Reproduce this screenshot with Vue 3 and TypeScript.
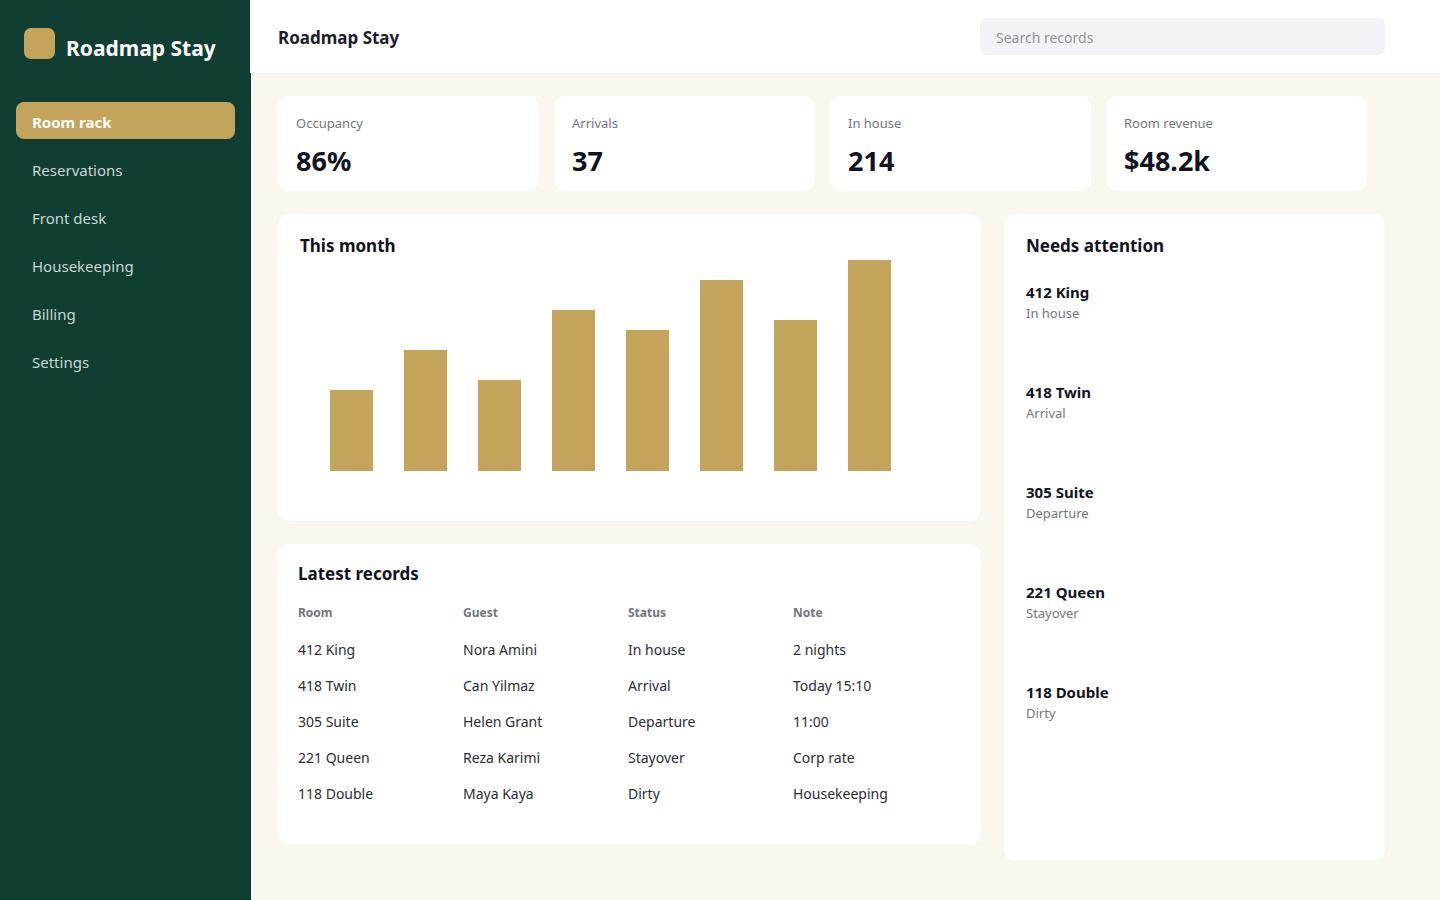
<script setup lang="ts">
import { ref } from 'vue'

interface RoomRecord {
  room: string
  guest: string
  status: string
  note: string
}

const navItems: string[] = ['Room rack', 'Reservations', 'Front desk', 'Housekeeping', 'Billing', 'Settings']
const active = ref<string>('Room rack')
const query = ref<string>('')

const stats: { label: string; value: string }[] = [
  { label: 'Occupancy', value: '86%' },
  { label: 'Arrivals', value: '37' },
  { label: 'In house', value: '214' },
  { label: 'Room revenue', value: '$48.2k' },
]

const bars: number[] = [81, 121, 91, 161, 141, 191, 151, 211]

const records: RoomRecord[] = [
  { room: '412 King', guest: 'Nora Amini', status: 'In house', note: '2 nights' },
  { room: '418 Twin', guest: 'Can Yilmaz', status: 'Arrival', note: 'Today 15:10' },
  { room: '305 Suite', guest: 'Helen Grant', status: 'Departure', note: '11:00' },
  { room: '221 Queen', guest: 'Reza Karimi', status: 'Stayover', note: 'Corp rate' },
  { room: '118 Double', guest: 'Maya Kaya', status: 'Dirty', note: 'Housekeeping' },
]
</script>

<template>
  <div class="app">
    <aside class="sidebar">
      <div class="brand">
        <span class="brand-mark"></span>
        <span class="brand-name">Roadmap Stay</span>
      </div>
      <nav class="nav" aria-label="Main">
        <a
          v-for="item in navItems"
          :key="item"
          href="#"
          class="nav-link"
          :class="{ active: item === active }"
          @click.prevent="active = item"
        >{{ item }}</a>
      </nav>
    </aside>

    <div class="page">
      <header class="topbar">
        <h1 class="page-title">Roadmap Stay</h1>
        <input v-model="query" class="search" type="search" placeholder="Search records" aria-label="Search records" />
      </header>

      <main class="content">
        <section class="stats">
          <div v-for="s in stats" :key="s.label" class="card stat">
            <div class="stat-label">{{ s.label }}</div>
            <div class="stat-value">{{ s.value }}</div>
          </div>
        </section>

        <div class="columns">
          <div class="left">
            <section class="card month">
              <h2 class="card-title">This month</h2>
              <div class="chart">
                <div v-for="(h, i) in bars" :key="i" class="bar" :style="{ height: h + 'px' }"></div>
              </div>
            </section>

            <section class="card records">
              <h2 class="card-title">Latest records</h2>
              <table class="table">
                <thead>
                  <tr>
                    <th scope="col">Room</th>
                    <th scope="col">Guest</th>
                    <th scope="col">Status</th>
                    <th scope="col">Note</th>
                  </tr>
                </thead>
                <tbody>
                  <tr v-for="r in records" :key="r.room">
                    <td>{{ r.room }}</td>
                    <td>{{ r.guest }}</td>
                    <td>{{ r.status }}</td>
                    <td>{{ r.note }}</td>
                  </tr>
                </tbody>
              </table>
            </section>
          </div>

          <section class="card attention">
            <h2 class="card-title">Needs attention</h2>
            <ul class="attention-list">
              <li v-for="r in records" :key="r.room" class="attention-item">
                <div class="attention-room">{{ r.room }}</div>
                <div class="attention-status">{{ r.status }}</div>
              </li>
            </ul>
          </section>
        </div>
      </main>
    </div>
  </div>
</template>

<style>
body {
  margin: 0;
  background: #faf7ef;
}
</style>

<style scoped>
.app {
  display: flex;
  min-height: 100vh;
  font-family: 'Noto Sans', 'Open Sans', sans-serif;
  color: #11141f;
}

.sidebar {
  box-sizing: border-box;
  flex: 0 0 251px;
  padding: 28px 16px;
  background: #113e33;
}

.brand {
  display: flex;
  align-items: flex-start;
  gap: 11px;
  padding: 0 8px;
  margin-bottom: 34px;
}

.brand-mark {
  width: 31px;
  height: 31px;
  border-radius: 7px;
  background: #c4a35a;
}

.brand-name {
  font-size: 21px;
  font-weight: 700;
  line-height: 40px;
  color: #fff;
  white-space: nowrap;
}

.nav {
  display: flex;
  flex-direction: column;
  gap: 11px;
}

.nav-link {
  padding: 4px 16px 0;
  border-radius: 8px;
  font-size: 15px;
  line-height: 33px;
  color: #c8d7d2;
  text-decoration: none;
}

.nav-link.active {
  background: #c4a35a;
  color: #fff;
  font-weight: 700;
}

.page {
  flex: 1;
  min-width: 0;
}

.topbar {
  display: flex;
  align-items: center;
  justify-content: space-between;
  gap: 24px;
  padding: 18px 55px 18px 28px;
  margin-left: -1px;
  background: #fff;
}

.page-title {
  margin: 0;
  padding-top: 2px;
  font-size: 17px;
  font-weight: 700;
  line-height: 26px;
  color: #1b1e28;
}

.search {
  box-sizing: border-box;
  flex: 0 1 405px;
  min-width: 0;
  height: 37px;
  padding: 2px 16px 0;
  border: 0;
  border-radius: 8px;
  background: #f1f3f7;
  font-family: inherit;
  font-size: 14px;
  color: #11141f;
  appearance: none;
}

.search::placeholder {
  color: #8f9298;
  opacity: 1;
}

.content {
  padding: 23px 55px 39px 27px;
}

.card {
  border-radius: 12px;
  background: #fff;
}

.stats {
  display: grid;
  grid-template-columns: repeat(4, minmax(0, 1fr));
  gap: 15px;
  padding-right: 18px;
  margin-bottom: 23px;
}

.stat {
  padding: 17px 18px 12px;
}

.stat-label {
  font-size: 13px;
  line-height: 20px;
  color: #73767d;
}

.stat-value {
  margin-top: 10px;
  font-size: 27px;
  font-weight: 700;
  line-height: 36px;
}

.columns {
  display: grid;
  grid-template-columns: minmax(0, 703fr) minmax(0, 381fr);
  align-items: start;
  gap: 23px;
}

.left {
  display: flex;
  flex-direction: column;
  gap: 23px;
}

.card-title {
  margin: 0;
  font-size: 17px;
  font-weight: 700;
  line-height: 26px;
}

.month {
  padding: 19px 22px 50px;
}

.chart {
  display: flex;
  align-items: flex-end;
  gap: 31px;
  padding: 1px 68px 0 30px;
}

.bar {
  flex: 1;
  background: #c4a35a;
}

.records {
  padding: 17px 23px 33px 20px;
}

.table {
  width: 100%;
  border-collapse: collapse;
  table-layout: fixed;
}

.table th {
  padding: 7px 0 0;
  font-size: 12px;
  font-weight: 700;
  line-height: 38px;
  text-align: left;
  color: #73767d;
}

.table td {
  padding: 0;
  font-size: 14px;
  line-height: 36px;
  color: #2a2d33;
}

.attention {
  padding: 19px 22px 79px;
}

.attention-list {
  margin: 23px 0 0;
  padding: 0;
  list-style: none;
}

.attention-item {
  min-height: 100px;
}

.attention-room {
  font-size: 15px;
  font-weight: 700;
  line-height: 21px;
}

.attention-status {
  font-size: 13px;
  line-height: 20px;
  color: #73767d;
}
</style>
